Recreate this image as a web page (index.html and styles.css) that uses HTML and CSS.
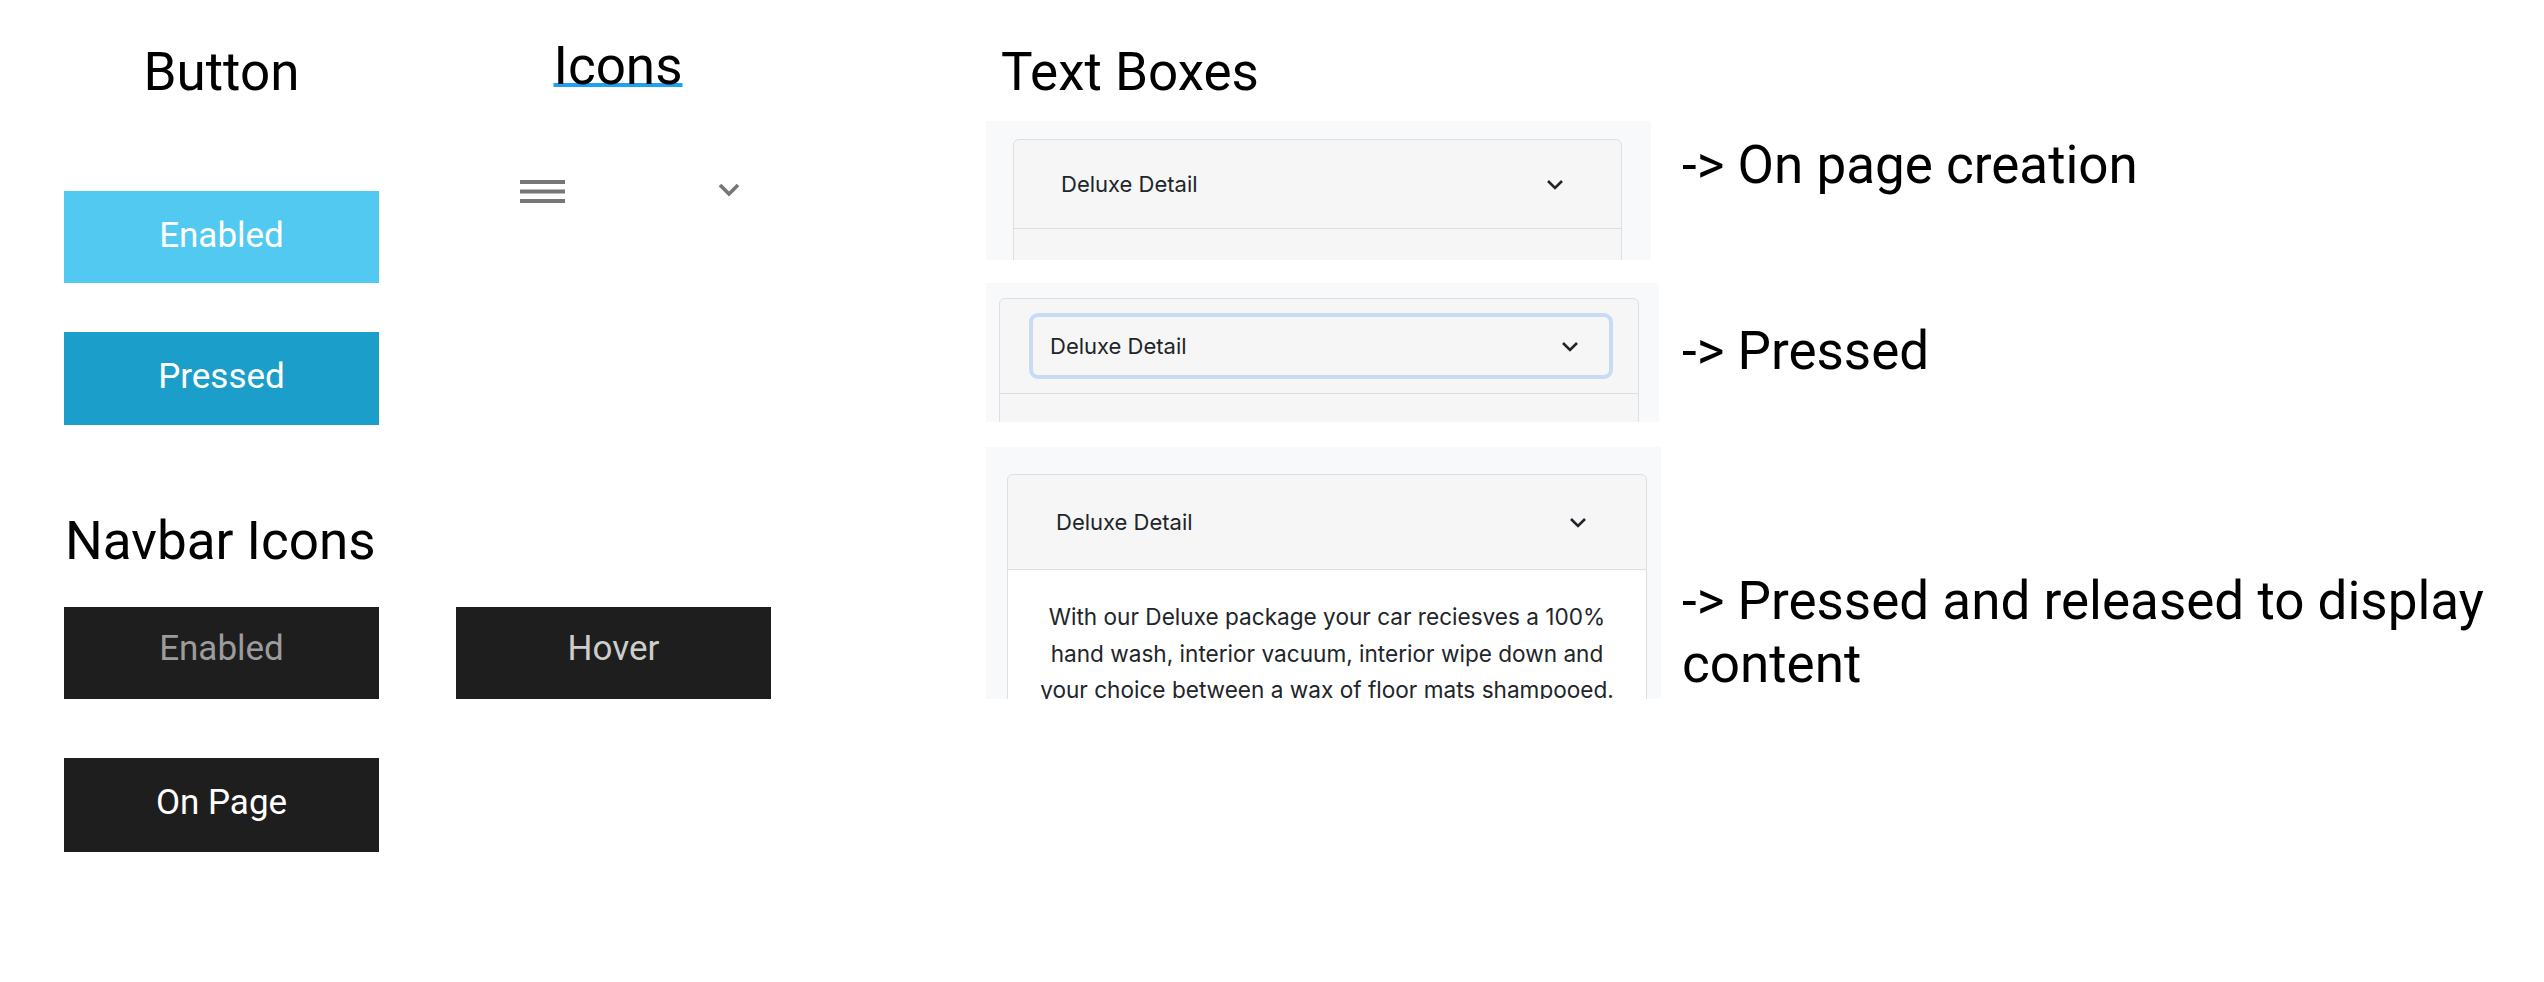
FILE: index.html
```html
<!DOCTYPE html>
<html lang="en">
<head>
<meta charset="utf-8">
<title>UI States</title>
<link rel="stylesheet" href="styles.css">
</head>
<body>
<main class="sheet">
  <section class="states">
    <div class="row row-heads">
      <h2 class="heading heading-button">Button</h2>
      <h2 class="heading heading-icons"><span class="underlined">Icons</span></h2>
    </div>
    <div class="row row-first">
      <div class="btn btn-enabled">Enabled</div>
      <div class="icon-set">
        <svg class="icon-menu" width="45" height="23" viewBox="0 0 45 23" aria-hidden="true">
          <rect x="0" y="0" width="45" height="4" fill="#767676"/>
          <rect x="0" y="9.5" width="45" height="4" fill="#767676"/>
          <rect x="0" y="19" width="45" height="4" fill="#767676"/>
        </svg>
        <svg class="icon-down" width="22" height="14" viewBox="0 0 22 14" aria-hidden="true">
          <polyline points="2,2 11,11 20,2" fill="none" stroke="#767676" stroke-width="3.6"/>
        </svg>
      </div>
    </div>
    <div class="row row-second">
      <div class="btn btn-pressed">Pressed</div>
    </div>
    <h2 class="heading heading-nav">Navbar Icons</h2>
    <div class="row row-nav">
      <div class="nav-item nav-enabled">Enabled</div>
      <div class="nav-item nav-hover">Hover</div>
    </div>
    <div class="row row-nav2">
      <div class="nav-item nav-active">On Page</div>
    </div>
  </section>

  <section class="textboxes">
    <h2 class="heading heading-tb">Text Boxes</h2>

    <div class="tb-row tb-row-1">
      <div class="panel panel-1">
        <div class="card">
          <div class="card-header header-1">
            <span>Deluxe Detail</span>
            <svg class="chev" width="18" height="11" viewBox="0 0 18 11" aria-hidden="true"><polyline points="2,2 9,9 16,2" fill="none" stroke="#212529" stroke-width="2.6"/></svg>
          </div>
        </div>
      </div>
      <p class="label label-1">-&gt; On page creation</p>
    </div>

    <div class="tb-row tb-row-2">
      <div class="panel panel-2">
        <div class="card">
          <div class="card-header header-2">
            <div class="focus-box">
              <span>Deluxe Detail</span>
              <svg class="chev" width="18" height="11" viewBox="0 0 18 11" aria-hidden="true"><polyline points="2,2 9,9 16,2" fill="none" stroke="#212529" stroke-width="2.6"/></svg>
            </div>
          </div>
        </div>
      </div>
      <p class="label label-2">-&gt; Pressed</p>
    </div>

    <div class="tb-row tb-row-3">
      <div class="panel panel-3">
        <div class="card card-open">
          <div class="card-header header-3">
            <span>Deluxe Detail</span>
            <svg class="chev" width="18" height="11" viewBox="0 0 18 11" aria-hidden="true"><polyline points="2,2 9,9 16,2" fill="none" stroke="#212529" stroke-width="2.6"/></svg>
          </div>
          <div class="card-body">
            <p>With our Deluxe package your car reciesves a 100% hand wash, interior vacuum, interior wipe down and your choice between a wax of floor mats shampooed.</p>
          </div>
        </div>
      </div>
      <p class="label label-3">-&gt; Pressed and released to display content</p>
    </div>
  </section>
</main>
</body>
</html>
```

FILE: styles.css
```css
* { box-sizing: border-box; }

html, body {
  margin: 0;
  padding: 0;
  background: #ffffff;
}

body {
  font-family: Roboto, "Liberation Sans", sans-serif;
  color: #000000;
}

.sheet {
  display: flex;
  align-items: flex-start;
  width: 2544px;
  height: 982px;
  padding-left: 64px;
  overflow: hidden;
}

/* ---------- left: buttons / icons / navbar ---------- */

.states {
  flex: none;
  width: 707px;
}

.row {
  display: flex;
  align-items: flex-start;
}

.heading {
  margin: 0;
  font-size: 53px;
  line-height: 53px;
  font-weight: 400;
  white-space: nowrap;
}

.row-heads {
  padding-top: 40px;
}

.heading-button {
  width: 315px;
  margin-top: 6px;
  text-align: center;
}

.heading-icons {
  width: 315px;
  margin-left: 77px;
  padding-left: 9px;
  text-align: center;
}

.underlined {
  text-decoration: underline;
  text-decoration-color: #1da1f2;
  text-decoration-thickness: 4px;
  text-underline-offset: -1px;
  text-decoration-skip-ink: none;
}

.row-first {
  margin-top: 81px;
}

.btn {
  display: flex;
  align-items: center;
  justify-content: center;
  width: 315px;
  padding-bottom: 4px;
  color: #ffffff;
  font-size: 35px;
}

.btn-enabled {
  height: 92px;
  margin-top: 11px;
  background: #51c9f1;
}

.btn-pressed {
  height: 93px;
  background: #1b9fca;
}

.icon-set {
  display: flex;
  align-items: flex-start;
  margin-left: 77px;
  padding-left: 64px;
  gap: 153px;
}

.icon-menu { display: block; }

.icon-down {
  display: block;
  margin-top: 3px;
}

.row-second {
  margin-top: 49px;
}

.heading-nav {
  margin-top: 90px;
  margin-left: 1px;
}

.row-nav {
  margin-top: 39px;
  gap: 77px;
}

.row-nav2 {
  margin-top: 59px;
}

.nav-item {
  display: flex;
  align-items: center;
  justify-content: center;
  width: 315px;
  height: 92px;
  padding-bottom: 9px;
  background: #1e1e1e;
  font-size: 35px;
}

.nav-enabled { color: #9c9c9c; }
.nav-hover { color: #cdcdcd; }
.nav-active {
  height: 94px;
  padding-bottom: 5px;
  color: #ffffff;
}

/* ---------- right: text boxes ---------- */

.textboxes {
  flex: none;
  width: 1558px;
  margin-left: 215px;
}

.heading-tb {
  margin-top: 46px;
  padding-left: 15px;
}

.tb-row {
  display: grid;
  grid-template-columns: 696px 1fr;
  align-items: start;
}

.tb-row-1 { margin-top: 22px; }
.tb-row-2 { margin-top: 23px; }
.tb-row-3 { margin-top: 25px; }

.panel {
  overflow: hidden;
  background: #f8f9fa;
}

.panel-1 {
  width: 665px;
  height: 139px;
  padding: 18px 29px 0 27px;
}

.panel-2 {
  width: 673px;
  height: 139px;
  padding: 15px 0 0 13px;
}

.panel-3 {
  width: 675px;
  height: 252px;
  padding: 27px 0 0 21px;
}

.panel-2 .card,
.panel-3 .card {
  width: 640px;
}

.card {
  height: 320px;
  background: #f6f6f6;
  border: 1px solid #dfdfdf;
  border-radius: 6px 6px 0 0;
  font-family: Inter, "Noto Sans", sans-serif;
  color: #212529;
}

.card-header {
  display: flex;
  align-items: center;
  justify-content: space-between;
  border-bottom: 1px solid #dfdfdf;
  font-size: 22px;
}

.header-1 {
  height: 89px;
  padding: 0 57px 0 47px;
}

.header-2 {
  height: 95px;
  padding: 14px 25px 14px 29px;
}

.focus-box {
  display: flex;
  align-items: center;
  justify-content: space-between;
  width: 100%;
  height: 66px;
  padding: 0 30px 0 17px;
  border: 4px solid #c7dbf7;
  border-radius: 9px;
}

.header-3 {
  height: 95px;
  padding: 0 59px 0 48px;
}

.chev {
  display: block;
  flex: none;
}

.card-open .card-body {
  background: #ffffff;
  height: 200px;
  padding: 29px 20px 0;
}

.card-body p {
  margin: 0 auto;
  max-width: 600px;
  text-align: center;
  font-size: 22.6px;
  line-height: 36.5px;
}

.label {
  margin: 0;
  max-width: 850px;
  font-size: 53px;
  line-height: 63px;
  font-weight: 400;
}

.label-1 { margin-top: 13px; }
.label-2 { margin-top: 37px; }
.label-3 { margin-top: 123px; }
```
